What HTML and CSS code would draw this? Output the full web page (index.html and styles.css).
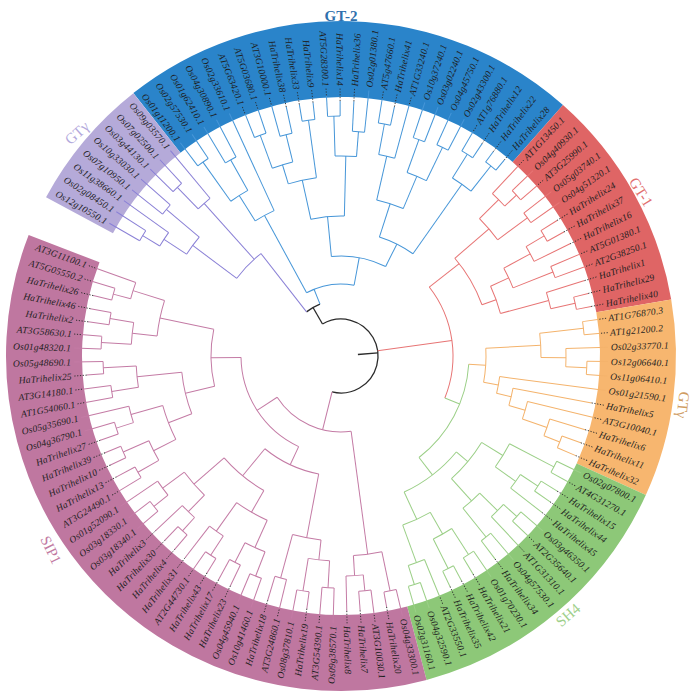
FILE: index.html
```html
<!DOCTYPE html>
<html>
<head>
<meta charset="utf-8">
<title>Trihelix phylogenetic tree</title>
<link rel="stylesheet" href="styles.css">
</head>
<body>
<div class="page">
<svg class="tree" width="700" height="700" viewBox="0 0 700 700" xmlns="http://www.w3.org/2000/svg">
<g transform="translate(341 356)">
  <!-- coloured bands -->
  <circle class="band bd-bl" r="297" pathLength="360" stroke-dasharray="79.8 999" transform="rotate(231.7)"/>
  <circle class="band bd-rd" r="297" pathLength="360" stroke-dasharray="38.8 999" transform="rotate(311.5)"/>
  <circle class="band bd-or" r="297" pathLength="360" stroke-dasharray="34.2 999" transform="rotate(350.3)"/>
  <circle class="band bd-gr" r="297" pathLength="360" stroke-dasharray="50.7 999" transform="rotate(24.5)"/>
  <circle class="band bd-pk" r="297" pathLength="360" stroke-dasharray="126 999" transform="rotate(75.2)"/>
  <circle class="band bd-pu" r="297" pathLength="360" stroke-dasharray="23.4 999" transform="rotate(208.3)"/>

  <!-- root -->
  <g class="t k">
    <line transform="rotate(-5)" x1="17" x2="37"/>
    <circle r="37" pathLength="360" stroke-dasharray="224 999" transform="rotate(240)"/>
    <line transform="rotate(240)" x1="37" x2="56"/>
    <circle r="56" pathLength="360" stroke-dasharray="16 999" transform="rotate(232)"/>
  </g>

  <!-- purple GTgamma -->
  <g class="t pu">
    <line transform="rotate(211.25)" x1="212" x2="232"/><circle r="232" pathLength="360" stroke-dasharray="2.9 999" transform="rotate(209.8)"/>
    <line transform="rotate(213.4)" x1="185" x2="212"/><circle r="212" pathLength="360" stroke-dasharray="4.35 999" transform="rotate(211.25)"/>
    <line transform="rotate(220)" x1="185" x2="228"/><circle r="228" pathLength="360" stroke-dasharray="3 999" transform="rotate(218.5)"/>
    <line transform="rotate(216.7)" x1="130" x2="185"/><circle r="185" pathLength="360" stroke-dasharray="6.6 999" transform="rotate(213.4)"/>
    <line transform="rotate(225.85)" x1="205" x2="235"/><circle r="235" pathLength="360" stroke-dasharray="2.9 999" transform="rotate(224.4)"/>
    <line transform="rotate(228.1)" x1="130" x2="205"/><circle r="205" pathLength="360" stroke-dasharray="4.45 999" transform="rotate(225.85)"/>
    <line transform="rotate(232)" x1="56" x2="130"/><circle r="130" pathLength="360" stroke-dasharray="15.3 999" transform="rotate(216.7)"/>

    <g transform="rotate(209.8)"><line x1="232" x2="267"/><text class="lab f" x="-270" y="3.3" transform="rotate(180)">Os12g10550.1</text></g>
    <g transform="rotate(212.7)"><line x1="232" x2="267"/><text class="lab f" x="-270" y="3.3" transform="rotate(180)">Os02g08450.1</text></g>
    <g transform="rotate(215.6)"><line x1="212" x2="267"/><text class="lab f" x="-270" y="3.3" transform="rotate(180)">Os11g38660.1</text></g>
    <g transform="rotate(218.5)"><line x1="228" x2="267"/><text class="lab f" x="-270" y="3.3" transform="rotate(180)">Os07g10950.1</text></g>
    <g transform="rotate(221.5)"><line x1="228" x2="267"/><text class="lab f" x="-270" y="3.3" transform="rotate(180)">Os10g33030.1</text></g>
    <g transform="rotate(224.4)"><line x1="235" x2="267"/><text class="lab f" x="-270" y="3.3" transform="rotate(180)">Os03g44130.1</text></g>
    <g transform="rotate(227.3)"><line x1="235" x2="267"/><text class="lab f" x="-270" y="3.3" transform="rotate(180)">Os07g02500.1</text></g>
    <g transform="rotate(230.3)"><line x1="205" x2="267"/><text class="lab f" x="-270" y="3.3" transform="rotate(180)">Os09g03570.1</text></g>
  </g>

  <!-- blue GT-2 -->
  <g class="t bl">
    <line transform="rotate(234.55)" x1="190" x2="238"/><circle r="238" pathLength="360" stroke-dasharray="3.1 999" transform="rotate(233)"/>
    <line transform="rotate(240.65)" x1="190" x2="225"/><circle r="225" pathLength="360" stroke-dasharray="3.1 999" transform="rotate(239.1)"/>
    <line transform="rotate(237.6)" x1="160" x2="190"/><circle r="190" pathLength="360" stroke-dasharray="6.1 999" transform="rotate(234.55)"/>
    <line transform="rotate(241.45)" x1="72" x2="160"/><circle r="160" pathLength="360" stroke-dasharray="7.7 999" transform="rotate(237.6)"/>
    <line transform="rotate(249.9)" x1="200" x2="235"/><circle r="235" pathLength="360" stroke-dasharray="3 999" transform="rotate(248.4)"/>
    <line transform="rotate(256.05)" x1="200" x2="228"/><circle r="228" pathLength="360" stroke-dasharray="3.1 999" transform="rotate(254.5)"/>
    <line transform="rotate(252.98)" x1="180" x2="200"/><circle r="200" pathLength="360" stroke-dasharray="6.15 999" transform="rotate(249.9)"/>
    <line transform="rotate(262.15)" x1="180" x2="238"/><circle r="238" pathLength="360" stroke-dasharray="3.1 999" transform="rotate(260.6)"/>
    <line transform="rotate(257.57)" x1="140" x2="180"/><circle r="180" pathLength="360" stroke-dasharray="9.17 999" transform="rotate(252.98)"/>
    <line transform="rotate(268.3)" x1="200" x2="240"/><circle r="240" pathLength="360" stroke-dasharray="3 999" transform="rotate(266.8)"/>
    <line transform="rotate(274.45)" x1="200" x2="225"/><circle r="225" pathLength="360" stroke-dasharray="3.1 999" transform="rotate(272.9)"/>
    <line transform="rotate(271.38)" x1="140" x2="200"/><circle r="200" pathLength="360" stroke-dasharray="6.15 999" transform="rotate(268.3)"/>
    <line transform="rotate(264.48)" x1="100" x2="140"/><circle r="140" pathLength="360" stroke-dasharray="13.81 999" transform="rotate(257.57)"/>
    <line transform="rotate(280.6)" x1="205" x2="236"/><circle r="236" pathLength="360" stroke-dasharray="3 999" transform="rotate(279.1)"/>
    <line transform="rotate(282.9)" x1="160" x2="205"/><circle r="205" pathLength="360" stroke-dasharray="4.6 999" transform="rotate(280.6)"/>
    <line transform="rotate(289.8)" x1="195" x2="230"/><circle r="230" pathLength="360" stroke-dasharray="3 999" transform="rotate(288.3)"/>
    <line transform="rotate(295.95)" x1="195" x2="232"/><circle r="232" pathLength="360" stroke-dasharray="3.1 999" transform="rotate(294.4)"/>
    <line transform="rotate(292.88)" x1="160" x2="195"/><circle r="195" pathLength="360" stroke-dasharray="6.15 999" transform="rotate(289.8)"/>
    <line transform="rotate(287.89)" x1="125" x2="160"/><circle r="160" pathLength="360" stroke-dasharray="9.98 999" transform="rotate(282.9)"/>
    <line transform="rotate(302.05)" x1="210" x2="238"/><circle r="238" pathLength="360" stroke-dasharray="3.1 999" transform="rotate(300.5)"/>
    <line transform="rotate(308.25)" x1="210" x2="242"/><circle r="242" pathLength="360" stroke-dasharray="3.1 999" transform="rotate(306.7)"/>
    <line transform="rotate(305.15)" x1="125" x2="210"/><circle r="210" pathLength="360" stroke-dasharray="6.2 999" transform="rotate(302.05)"/>
    <line transform="rotate(296.52)" x1="100" x2="125"/><circle r="125" pathLength="360" stroke-dasharray="17.26 999" transform="rotate(287.89)"/>
    <line transform="rotate(280.5)" x1="72" x2="100"/><circle r="100" pathLength="360" stroke-dasharray="32.04 999" transform="rotate(264.48)"/>
    <line transform="rotate(248)" x1="56" x2="72"/><circle r="72" pathLength="360" stroke-dasharray="39.05 999" transform="rotate(241.45)"/>

    <g transform="rotate(233)"><line x1="238" x2="267"/><text class="lab f" x="-270" y="3.3" transform="rotate(180)">Os01g11200.1</text></g>
    <g transform="rotate(236.1)"><line x1="238" x2="267"/><text class="lab f" x="-270" y="3.3" transform="rotate(180)">Os02g57530.1</text></g>
    <g transform="rotate(239.1)"><line x1="225" x2="267"/><text class="lab f" x="-270" y="3.3" transform="rotate(180)">Os01g62410.1</text></g>
    <g transform="rotate(242.2)"><line x1="225" x2="267"/><text class="lab f" x="-270" y="3.3" transform="rotate(180)">Os04g30890.1</text></g>
    <g transform="rotate(245.3)"><line x1="160" x2="267"/><text class="lab f" x="-270" y="3.3" transform="rotate(180)">Os02g33610.1</text></g>
    <g transform="rotate(248.4)"><line x1="235" x2="261"/><line class="dot" x1="261" x2="268"/><text class="lab f" x="-270" y="3.3" transform="rotate(180)">AT5G63420.1</text></g>
    <g transform="rotate(251.4)"><line x1="235" x2="261"/><line class="dot" x1="261" x2="268"/><text class="lab f" x="-270" y="3.3" transform="rotate(180)">AT5G03680.1</text></g>
    <g transform="rotate(254.5)"><line x1="228" x2="261"/><line class="dot" x1="261" x2="268"/><text class="lab f" x="-270" y="3.3" transform="rotate(180)">AT3G10000.1</text></g>
    <g transform="rotate(257.6)"><line x1="228" x2="255"/><line class="dot" x1="255" x2="268"/><text class="lab f" x="-270" y="3.3" transform="rotate(180)">HaTrihelix38</text></g>
    <g transform="rotate(260.6)"><line x1="238" x2="255"/><line class="dot" x1="255" x2="268"/><text class="lab f" x="-270" y="3.3" transform="rotate(180)">HaTrihelix33</text></g>
    <g transform="rotate(263.7)"><line x1="238" x2="255"/><line class="dot" x1="255" x2="268"/><text class="lab f" x="-270" y="3.3" transform="rotate(180)">HaTrihelix9</text></g>
    <g transform="rotate(266.8)"><line x1="240" x2="261"/><line class="dot" x1="261" x2="268"/><text class="lab f" x="-270" y="3.3" transform="rotate(180)">AT5G28300.1</text></g>
    <g transform="rotate(269.8)"><line x1="240" x2="255"/><line class="dot" x1="255" x2="268"/><text class="lab f" x="-270" y="3.3" transform="rotate(180)">HaTrihelix14</text></g>
    <g transform="rotate(272.9)"><line x1="225" x2="255"/><line class="dot" x1="255" x2="268"/><text class="lab" x="270" y="3.3">HaTrihelix36</text></g>
    <g transform="rotate(276)"><line x1="225" x2="267"/><text class="lab" x="270" y="3.3">Os02g01380.1</text></g>
    <g transform="rotate(279.1)"><line x1="236" x2="261"/><line class="dot" x1="261" x2="268"/><text class="lab" x="270" y="3.3">AT5g47660.1</text></g>
    <g transform="rotate(282.1)"><line x1="236" x2="255"/><line class="dot" x1="255" x2="268"/><text class="lab" x="270" y="3.3">HaTrihelix41</text></g>
    <g transform="rotate(285.2)"><line x1="205" x2="261"/><line class="dot" x1="261" x2="268"/><text class="lab" x="270" y="3.3">AT1G33240.1</text></g>
    <g transform="rotate(288.3)"><line x1="230" x2="267"/><text class="lab" x="270" y="3.3">Os10g37240.1</text></g>
    <g transform="rotate(291.3)"><line x1="230" x2="267"/><text class="lab" x="270" y="3.3">Os03g02240.1</text></g>
    <g transform="rotate(294.4)"><line x1="232" x2="267"/><text class="lab" x="270" y="3.3">Os04g45750.1</text></g>
    <g transform="rotate(297.5)"><line x1="232" x2="267"/><text class="lab" x="270" y="3.3">Os02g43300.1</text></g>
    <g transform="rotate(300.5)"><line x1="238" x2="261"/><line class="dot" x1="261" x2="268"/><text class="lab" x="270" y="3.3">AT1g76880.1</text></g>
    <g transform="rotate(303.6)"><line x1="238" x2="255"/><line class="dot" x1="255" x2="268"/><text class="lab" x="270" y="3.3">HaTrihelix12</text></g>
    <g transform="rotate(306.7)"><line x1="242" x2="255"/><line class="dot" x1="255" x2="268"/><text class="lab" x="270" y="3.3">HaTrihelix22</text></g>
    <g transform="rotate(309.8)"><line x1="242" x2="255"/><line class="dot" x1="255" x2="268"/><text class="lab" x="270" y="3.3">HaTrihelix28</text></g>
  </g>

  <!-- red GT-1 -->
  <g class="t rd">
    <line transform="rotate(-8)" x1="37" x2="112"/><circle r="112" pathLength="360" stroke-dasharray="60 999" transform="rotate(-38)"/>
    <line transform="rotate(-42.5)" x1="222" x2="238"/><circle r="238" pathLength="360" stroke-dasharray="3 999" transform="rotate(-44)"/>
    <line transform="rotate(-44.75)" x1="195" x2="222"/><circle r="222" pathLength="360" stroke-dasharray="4.5 999" transform="rotate(-47)"/>
    <line transform="rotate(-36.55)" x1="195" x2="232"/><circle r="232" pathLength="360" stroke-dasharray="2.9 999" transform="rotate(-38)"/>
    <line transform="rotate(-40.65)" x1="150" x2="195"/><circle r="195" pathLength="360" stroke-dasharray="8.2 999" transform="rotate(-44.75)"/>
    <line transform="rotate(-30.6)" x1="215" x2="236"/><circle r="236" pathLength="360" stroke-dasharray="3 999" transform="rotate(-32.1)"/>
    <line transform="rotate(-28.35)" x1="185" x2="215"/><circle r="215" pathLength="360" stroke-dasharray="4.5 999" transform="rotate(-30.6)"/>
    <line transform="rotate(-21.6)" x1="185" x2="228"/><circle r="228" pathLength="360" stroke-dasharray="3 999" transform="rotate(-23.1)"/>
    <line transform="rotate(-24.98)" x1="165" x2="185"/><circle r="185" pathLength="360" stroke-dasharray="6.75 999" transform="rotate(-28.35)"/>
    <line transform="rotate(-12.7)" x1="215" x2="240"/><circle r="240" pathLength="360" stroke-dasharray="3 999" transform="rotate(-14.2)"/>
    <line transform="rotate(-14.95)" x1="165" x2="215"/><circle r="215" pathLength="360" stroke-dasharray="4.5 999" transform="rotate(-17.2)"/>
    <line transform="rotate(-19.96)" x1="150" x2="165"/><circle r="165" pathLength="360" stroke-dasharray="10.03 999" transform="rotate(-24.98)"/>
    <line transform="rotate(-38)" x1="112" x2="150"/><circle r="150" pathLength="360" stroke-dasharray="20.69 999" transform="rotate(-40.65)"/>

    <g transform="rotate(-47)"><line x1="222" x2="261"/><line class="dot" x1="261" x2="268"/><text class="lab" x="270" y="3.3">AT1G13450.1</text></g>
    <g transform="rotate(-44)"><line x1="238" x2="267"/><text class="lab" x="270" y="3.3">Os04g40930.1</text></g>
    <g transform="rotate(-41)"><line x1="238" x2="261"/><line class="dot" x1="261" x2="268"/><text class="lab" x="270" y="3.3">AT3G25990.1</text></g>
    <g transform="rotate(-38)"><line x1="232" x2="267"/><text class="lab" x="270" y="3.3">Os05g03740.1</text></g>
    <g transform="rotate(-35.1)"><line x1="232" x2="267"/><text class="lab" x="270" y="3.3">Os04g51320.1</text></g>
    <g transform="rotate(-32.1)"><line x1="236" x2="255"/><line class="dot" x1="255" x2="268"/><text class="lab" x="270" y="3.3">HaTrihelix24</text></g>
    <g transform="rotate(-29.1)"><line x1="236" x2="255"/><line class="dot" x1="255" x2="268"/><text class="lab" x="270" y="3.3">HaTrihelix37</text></g>
    <g transform="rotate(-26.1)"><line x1="215" x2="255"/><line class="dot" x1="255" x2="268"/><text class="lab" x="270" y="3.3">HaTrihelix16</text></g>
    <g transform="rotate(-23.1)"><line x1="228" x2="261"/><line class="dot" x1="261" x2="268"/><text class="lab" x="270" y="3.3">AT5G01380.1</text></g>
    <g transform="rotate(-20.1)"><line x1="228" x2="261"/><line class="dot" x1="261" x2="268"/><text class="lab" x="270" y="3.3">AT2G38250.1</text></g>
    <g transform="rotate(-17.2)"><line x1="215" x2="255"/><line class="dot" x1="255" x2="268"/><text class="lab" x="270" y="3.3">HaTrihelix1</text></g>
    <g transform="rotate(-14.2)"><line x1="240" x2="255"/><line class="dot" x1="255" x2="268"/><text class="lab" x="270" y="3.3">HaTrihelix29</text></g>
    <g transform="rotate(-11.2)"><line x1="240" x2="255"/><line class="dot" x1="255" x2="268"/><text class="lab" x="270" y="3.3">HaTrihelix40</text></g>
  </g>

  <!-- orange GTgamma -->
  <g class="t or">
    <line transform="rotate(-6.55)" x1="200" x2="244"/><circle r="244" pathLength="360" stroke-dasharray="3.1 999" transform="rotate(-8.1)"/>
    <line transform="rotate(2.75)" x1="225" x2="246"/><circle r="246" pathLength="360" stroke-dasharray="3.1 999" transform="rotate(1.2)"/>
    <line transform="rotate(0.43)" x1="200" x2="225"/><circle r="225" pathLength="360" stroke-dasharray="4.65 999" transform="rotate(-1.9)"/>
    <line transform="rotate(-3.06)" x1="145" x2="200"/><circle r="200" pathLength="360" stroke-dasharray="6.98 999" transform="rotate(-6.55)"/>
    <line transform="rotate(21.45)" x1="218" x2="235"/><circle r="235" pathLength="360" stroke-dasharray="3.1 999" transform="rotate(19.9)"/>
    <line transform="rotate(19.13)" x1="192" x2="218"/><circle r="218" pathLength="360" stroke-dasharray="4.65 999" transform="rotate(16.8)"/>
    <line transform="rotate(16.41)" x1="175" x2="192"/><circle r="192" pathLength="360" stroke-dasharray="5.43 999" transform="rotate(13.7)"/>
    <line transform="rotate(13.5)" x1="160" x2="175"/><circle r="175" pathLength="360" stroke-dasharray="5.81 999" transform="rotate(10.6)"/>
    <line transform="rotate(10.45)" x1="145" x2="160"/><circle r="160" pathLength="360" stroke-dasharray="6.1 999" transform="rotate(7.4)"/>
    <line transform="rotate(3.7)" x1="128" x2="145"/><circle r="145" pathLength="360" stroke-dasharray="13.51 999" transform="rotate(-3.06)"/>

    <g transform="rotate(-8.1)"><line x1="244" x2="261"/><line class="dot" x1="261" x2="268"/><text class="lab" x="270" y="3.3">AT1G76870.3</text></g>
    <g transform="rotate(-5)"><line x1="244" x2="261"/><line class="dot" x1="261" x2="268"/><text class="lab" x="270" y="3.3">AT1g21200.2</text></g>
    <g transform="rotate(-1.9)"><line x1="225" x2="267"/><text class="lab" x="270" y="3.3">Os02g33770.1</text></g>
    <g transform="rotate(1.2)"><line x1="246" x2="267"/><text class="lab" x="270" y="3.3">Os12g06640.1</text></g>
    <g transform="rotate(4.3)"><line x1="246" x2="267"/><text class="lab" x="270" y="3.3">Os11g06410.1</text></g>
    <g transform="rotate(7.4)"><line x1="160" x2="267"/><text class="lab" x="270" y="3.3">Os01g21590.1</text></g>
    <g transform="rotate(10.6)"><line x1="175" x2="255"/><line class="dot" x1="255" x2="268"/><text class="lab" x="270" y="3.3">HaTrihelix5</text></g>
    <g transform="rotate(13.7)"><line x1="192" x2="261"/><line class="dot" x1="261" x2="268"/><text class="lab" x="270" y="3.3">AT3G10040.1</text></g>
    <g transform="rotate(16.8)"><line x1="218" x2="255"/><line class="dot" x1="255" x2="268"/><text class="lab" x="270" y="3.3">HaTrihelix6</text></g>
    <g transform="rotate(19.9)"><line x1="235" x2="255"/><line class="dot" x1="255" x2="268"/><text class="lab" x="270" y="3.3">HaTrihelix11</text></g>
    <g transform="rotate(23)"><line x1="235" x2="255"/><line class="dot" x1="255" x2="268"/><text class="lab" x="270" y="3.3">HaTrihelix32</text></g>
  </g>

  <!-- green SH4 -->
  <g class="t gr">
    <line transform="rotate(22)" x1="112" x2="128"/><circle r="128" pathLength="360" stroke-dasharray="48.75 999" transform="rotate(3.7)"/>
    <line transform="rotate(27.5)" x1="190" x2="240"/><circle r="240" pathLength="360" stroke-dasharray="3 999" transform="rotate(26)"/>
    <line transform="rotate(33.45)" x1="215" x2="236"/><circle r="236" pathLength="360" stroke-dasharray="2.9 999" transform="rotate(32)"/>
    <line transform="rotate(35.68)" x1="190" x2="215"/><circle r="215" pathLength="360" stroke-dasharray="4.45 999" transform="rotate(33.45)"/>
    <line transform="rotate(31.59)" x1="165" x2="190"/><circle r="190" pathLength="360" stroke-dasharray="8.18 999" transform="rotate(27.5)"/>
    <line transform="rotate(42.4)" x1="220" x2="238"/><circle r="238" pathLength="360" stroke-dasharray="3 999" transform="rotate(40.9)"/>
    <line transform="rotate(44.65)" x1="195" x2="220"/><circle r="220" pathLength="360" stroke-dasharray="4.5 999" transform="rotate(42.4)"/>
    <line transform="rotate(51.3)" x1="195" x2="232"/><circle r="232" pathLength="360" stroke-dasharray="3 999" transform="rotate(49.8)"/>
    <line transform="rotate(47.98)" x1="165" x2="195"/><circle r="195" pathLength="360" stroke-dasharray="6.65 999" transform="rotate(44.65)"/>
    <line transform="rotate(39.78)" x1="150" x2="165"/><circle r="165" pathLength="360" stroke-dasharray="16.39 999" transform="rotate(31.59)"/>
    <line transform="rotate(57.3)" x1="205" x2="236"/><circle r="236" pathLength="360" stroke-dasharray="3 999" transform="rotate(55.8)"/>
    <line transform="rotate(63.25)" x1="205" x2="238"/><circle r="238" pathLength="360" stroke-dasharray="2.9 999" transform="rotate(61.8)"/>
    <line transform="rotate(60.28)" x1="180" x2="205"/><circle r="205" pathLength="360" stroke-dasharray="5.95 999" transform="rotate(57.3)"/>
    <line transform="rotate(72.2)" x1="220" x2="240"/><circle r="240" pathLength="360" stroke-dasharray="3 999" transform="rotate(70.7)"/>
    <line transform="rotate(69.95)" x1="180" x2="220"/><circle r="220" pathLength="360" stroke-dasharray="4.5 999" transform="rotate(67.7)"/>
    <line transform="rotate(65.11)" x1="150" x2="180"/><circle r="180" pathLength="360" stroke-dasharray="9.67 999" transform="rotate(60.28)"/>
    <line transform="rotate(52.45)" x1="128" x2="150"/><circle r="150" pathLength="360" stroke-dasharray="25.33 999" transform="rotate(39.78)"/>

    <g transform="rotate(26)"><line x1="240" x2="267"/><text class="lab" x="270" y="3.3">Os02g07800.1</text></g>
    <g transform="rotate(29)"><line x1="240" x2="261"/><line class="dot" x1="261" x2="268"/><text class="lab" x="270" y="3.3">AT4G31270.1</text></g>
    <g transform="rotate(32)"><line x1="236" x2="255"/><line class="dot" x1="255" x2="268"/><text class="lab" x="270" y="3.3">HaTrihelix15</text></g>
    <g transform="rotate(34.9)"><line x1="236" x2="255"/><line class="dot" x1="255" x2="268"/><text class="lab" x="270" y="3.3">HaTrihelix44</text></g>
    <g transform="rotate(37.9)"><line x1="215" x2="255"/><line class="dot" x1="255" x2="268"/><text class="lab" x="270" y="3.3">HaTrihelix45</text></g>
    <g transform="rotate(40.9)"><line x1="238" x2="267"/><text class="lab" x="270" y="3.3">Os03g46350.1</text></g>
    <g transform="rotate(43.9)"><line x1="238" x2="261"/><line class="dot" x1="261" x2="268"/><text class="lab" x="270" y="3.3">AT2G35640.1</text></g>
    <g transform="rotate(46.9)"><line x1="220" x2="261"/><line class="dot" x1="261" x2="268"/><text class="lab" x="270" y="3.3">AT1G31310.1</text></g>
    <g transform="rotate(49.8)"><line x1="232" x2="267"/><text class="lab" x="270" y="3.3">Os04g57530.1</text></g>
    <g transform="rotate(52.8)"><line x1="232" x2="255"/><line class="dot" x1="255" x2="268"/><text class="lab" x="270" y="3.3">HaTrihelix34</text></g>
    <g transform="rotate(55.8)"><line x1="236" x2="267"/><text class="lab" x="270" y="3.3">Os01g70230.1</text></g>
    <g transform="rotate(58.8)"><line x1="236" x2="255"/><line class="dot" x1="255" x2="268"/><text class="lab" x="270" y="3.3">HaTrihelix21</text></g>
    <g transform="rotate(61.8)"><line x1="238" x2="255"/><line class="dot" x1="255" x2="268"/><text class="lab" x="270" y="3.3">HaTrihelix42</text></g>
    <g transform="rotate(64.7)"><line x1="238" x2="255"/><line class="dot" x1="255" x2="268"/><text class="lab" x="270" y="3.3">HaTrihelix35</text></g>
    <g transform="rotate(67.7)"><line x1="220" x2="261"/><line class="dot" x1="261" x2="268"/><text class="lab" x="270" y="3.3">AT2G33550.1</text></g>
    <g transform="rotate(70.7)"><line x1="240" x2="267"/><text class="lab" x="270" y="3.3">Os04g32590.1</text></g>
    <g transform="rotate(73.7)"><line x1="240" x2="267"/><text class="lab" x="270" y="3.3">Os02g31160.1</text></g>
  </g>

  <!-- pink SIP1 -->
  <g class="t pk">
    <line transform="rotate(104)" x1="37" x2="76"/><circle r="76" pathLength="360" stroke-dasharray="64.77 999" transform="rotate(82.33)"/>
    <line transform="rotate(78.2)" x1="200" x2="240"/><circle r="240" pathLength="360" stroke-dasharray="3 999" transform="rotate(76.7)"/>
    <line transform="rotate(84.2)" x1="220" x2="236"/><circle r="236" pathLength="360" stroke-dasharray="3 999" transform="rotate(82.7)"/>
    <line transform="rotate(86.45)" x1="200" x2="220"/><circle r="220" pathLength="360" stroke-dasharray="4.5 999" transform="rotate(84.2)"/>
    <line transform="rotate(82.33)" x1="76" x2="200"/><circle r="200" pathLength="360" stroke-dasharray="8.25 999" transform="rotate(78.2)"/>
    <line transform="rotate(93.2)" x1="205" x2="232"/><circle r="232" pathLength="360" stroke-dasharray="3 999" transform="rotate(91.7)"/>
    <line transform="rotate(99.2)" x1="205" x2="238"/><circle r="238" pathLength="360" stroke-dasharray="3 999" transform="rotate(97.7)"/>
    <line transform="rotate(96.2)" x1="185" x2="205"/><circle r="205" pathLength="360" stroke-dasharray="6 999" transform="rotate(93.2)"/>
    <line transform="rotate(105.2)" x1="185" x2="230"/><circle r="230" pathLength="360" stroke-dasharray="3 999" transform="rotate(103.7)"/>
    <line transform="rotate(100.7)" x1="120" x2="185"/><circle r="185" pathLength="360" stroke-dasharray="9 999" transform="rotate(96.2)"/>
    <line transform="rotate(111.2)" x1="210" x2="236"/><circle r="236" pathLength="360" stroke-dasharray="3 999" transform="rotate(109.7)"/>
    <line transform="rotate(117.2)" x1="210" x2="232"/><circle r="232" pathLength="360" stroke-dasharray="3 999" transform="rotate(115.7)"/>
    <line transform="rotate(114.2)" x1="180" x2="210"/><circle r="210" pathLength="360" stroke-dasharray="6 999" transform="rotate(111.2)"/>
    <line transform="rotate(123.2)" x1="215" x2="238"/><circle r="238" pathLength="360" stroke-dasharray="3 999" transform="rotate(121.7)"/>
    <line transform="rotate(125.45)" x1="180" x2="215"/><circle r="215" pathLength="360" stroke-dasharray="4.5 999" transform="rotate(123.2)"/>
    <line transform="rotate(119.83)" x1="155" x2="180"/><circle r="180" pathLength="360" stroke-dasharray="11.25 999" transform="rotate(114.2)"/>
    <line transform="rotate(132.2)" x1="218" x2="236"/><circle r="236" pathLength="360" stroke-dasharray="3 999" transform="rotate(130.7)"/>
    <line transform="rotate(134.45)" x1="195" x2="218"/><circle r="218" pathLength="360" stroke-dasharray="4.5 999" transform="rotate(132.2)"/>
    <line transform="rotate(141.2)" x1="222" x2="240"/><circle r="240" pathLength="360" stroke-dasharray="3 999" transform="rotate(139.7)"/>
    <line transform="rotate(143.45)" x1="195" x2="222"/><circle r="222" pathLength="360" stroke-dasharray="4.5 999" transform="rotate(141.2)"/>
    <line transform="rotate(138.95)" x1="155" x2="195"/><circle r="195" pathLength="360" stroke-dasharray="9 999" transform="rotate(134.45)"/>
    <line transform="rotate(129.39)" x1="120" x2="155"/><circle r="155" pathLength="360" stroke-dasharray="19.12 999" transform="rotate(119.83)"/>
    <line transform="rotate(115.05)" x1="100" x2="120"/><circle r="120" pathLength="360" stroke-dasharray="28.69 999" transform="rotate(100.7)"/>
    <line transform="rotate(150.2)" x1="210" x2="234"/><circle r="234" pathLength="360" stroke-dasharray="3 999" transform="rotate(148.7)"/>
    <line transform="rotate(156.2)" x1="210" x2="238"/><circle r="238" pathLength="360" stroke-dasharray="3 999" transform="rotate(154.7)"/>
    <line transform="rotate(153.2)" x1="185" x2="210"/><circle r="210" pathLength="360" stroke-dasharray="6 999" transform="rotate(150.2)"/>
    <line transform="rotate(162.2)" x1="218" x2="236"/><circle r="236" pathLength="360" stroke-dasharray="3 999" transform="rotate(160.7)"/>
    <line transform="rotate(164.45)" x1="185" x2="218"/><circle r="218" pathLength="360" stroke-dasharray="4.5 999" transform="rotate(162.2)"/>
    <line transform="rotate(158.83)" x1="160" x2="185"/><circle r="185" pathLength="360" stroke-dasharray="11.25 999" transform="rotate(153.2)"/>
    <line transform="rotate(171.2)" x1="205" x2="232"/><circle r="232" pathLength="360" stroke-dasharray="3 999" transform="rotate(169.7)"/>
    <line transform="rotate(177.2)" x1="205" x2="238"/><circle r="238" pathLength="360" stroke-dasharray="3 999" transform="rotate(175.7)"/>
    <line transform="rotate(174.2)" x1="160" x2="205"/><circle r="205" pathLength="360" stroke-dasharray="6 999" transform="rotate(171.2)"/>
    <line transform="rotate(166.52)" x1="130" x2="160"/><circle r="160" pathLength="360" stroke-dasharray="15.37 999" transform="rotate(158.83)"/>
    <line transform="rotate(183.2)" x1="210" x2="240"/><circle r="240" pathLength="360" stroke-dasharray="3 999" transform="rotate(181.7)"/>
    <line transform="rotate(189.2)" x1="210" x2="234"/><circle r="234" pathLength="360" stroke-dasharray="3 999" transform="rotate(187.7)"/>
    <line transform="rotate(186.2)" x1="185" x2="210"/><circle r="210" pathLength="360" stroke-dasharray="6 999" transform="rotate(183.2)"/>
    <line transform="rotate(195.2)" x1="218" x2="236"/><circle r="236" pathLength="360" stroke-dasharray="3 999" transform="rotate(193.7)"/>
    <line transform="rotate(197.45)" x1="185" x2="218"/><circle r="218" pathLength="360" stroke-dasharray="4.5 999" transform="rotate(195.2)"/>
    <line transform="rotate(191.83)" x1="130" x2="185"/><circle r="185" pathLength="360" stroke-dasharray="11.25 999" transform="rotate(186.2)"/>
    <line transform="rotate(179.18)" x1="100" x2="130"/><circle r="130" pathLength="360" stroke-dasharray="25.31 999" transform="rotate(166.52)"/>
    <line transform="rotate(147.1)" x1="76" x2="100"/><circle r="100" pathLength="360" stroke-dasharray="64.13 999" transform="rotate(115.05)"/>

    <g transform="rotate(76.7)"><line x1="240" x2="267"/><text class="lab" x="270" y="3.3">Os04g33300.1</text></g>
    <g transform="rotate(79.7)"><line x1="240" x2="255"/><line class="dot" x1="255" x2="268"/><text class="lab" x="270" y="3.3">HaTrihelix20</text></g>
    <g transform="rotate(82.7)"><line x1="236" x2="261"/><line class="dot" x1="261" x2="268"/><text class="lab" x="270" y="3.3">AT3G10030.1</text></g>
    <g transform="rotate(85.7)"><line x1="236" x2="255"/><line class="dot" x1="255" x2="268"/><text class="lab" x="270" y="3.3">HaTrihelix7</text></g>
    <g transform="rotate(88.7)"><line x1="220" x2="255"/><line class="dot" x1="255" x2="268"/><text class="lab" x="270" y="3.3">HaTrihelix8</text></g>
    <g transform="rotate(91.7)"><line x1="232" x2="267"/><text class="lab f" x="-270" y="3.3" transform="rotate(180)">Os09g38570.1</text></g>
    <g transform="rotate(94.7)"><line x1="232" x2="261"/><line class="dot" x1="261" x2="268"/><text class="lab f" x="-270" y="3.3" transform="rotate(180)">AT3G54390.1</text></g>
    <g transform="rotate(97.7)"><line x1="238" x2="255"/><line class="dot" x1="255" x2="268"/><text class="lab f" x="-270" y="3.3" transform="rotate(180)">HaTrihelix19</text></g>
    <g transform="rotate(100.7)"><line x1="238" x2="267"/><text class="lab f" x="-270" y="3.3" transform="rotate(180)">Os08g37810.1</text></g>
    <g transform="rotate(103.7)"><line x1="230" x2="261"/><line class="dot" x1="261" x2="268"/><text class="lab f" x="-270" y="3.3" transform="rotate(180)">AT3G24860.1</text></g>
    <g transform="rotate(106.7)"><line x1="230" x2="255"/><line class="dot" x1="255" x2="268"/><text class="lab f" x="-270" y="3.3" transform="rotate(180)">HaTrihelix18</text></g>
    <g transform="rotate(109.7)"><line x1="236" x2="267"/><text class="lab f" x="-270" y="3.3" transform="rotate(180)">Os10g41460.1</text></g>
    <g transform="rotate(112.7)"><line x1="236" x2="267"/><text class="lab f" x="-270" y="3.3" transform="rotate(180)">Os04g45940.1</text></g>
    <g transform="rotate(115.7)"><line x1="232" x2="255"/><line class="dot" x1="255" x2="268"/><text class="lab f" x="-270" y="3.3" transform="rotate(180)">HaTrihelix23</text></g>
    <g transform="rotate(118.7)"><line x1="232" x2="255"/><line class="dot" x1="255" x2="268"/><text class="lab f" x="-270" y="3.3" transform="rotate(180)">HaTrihelix17</text></g>
    <g transform="rotate(121.7)"><line x1="238" x2="255"/><line class="dot" x1="255" x2="268"/><text class="lab f" x="-270" y="3.3" transform="rotate(180)">HaTrihelix43</text></g>
    <g transform="rotate(124.7)"><line x1="238" x2="261"/><line class="dot" x1="261" x2="268"/><text class="lab f" x="-270" y="3.3" transform="rotate(180)">AT2G44730.1</text></g>
    <g transform="rotate(127.7)"><line x1="215" x2="255"/><line class="dot" x1="255" x2="268"/><text class="lab f" x="-270" y="3.3" transform="rotate(180)">HaTrihelix31</text></g>
    <g transform="rotate(130.7)"><line x1="236" x2="255"/><line class="dot" x1="255" x2="268"/><text class="lab f" x="-270" y="3.3" transform="rotate(180)">HaTrihelix4</text></g>
    <g transform="rotate(133.7)"><line x1="236" x2="255"/><line class="dot" x1="255" x2="268"/><text class="lab f" x="-270" y="3.3" transform="rotate(180)">HaTrihelix30</text></g>
    <g transform="rotate(136.7)"><line x1="218" x2="255"/><line class="dot" x1="255" x2="268"/><text class="lab f" x="-270" y="3.3" transform="rotate(180)">HaTrihelix3</text></g>
    <g transform="rotate(139.7)"><line x1="240" x2="267"/><text class="lab f" x="-270" y="3.3" transform="rotate(180)">Os03g18340.1</text></g>
    <g transform="rotate(142.7)"><line x1="240" x2="267"/><text class="lab f" x="-270" y="3.3" transform="rotate(180)">Os03g18330.1</text></g>
    <g transform="rotate(145.7)"><line x1="222" x2="267"/><text class="lab f" x="-270" y="3.3" transform="rotate(180)">Os01g52090.1</text></g>
    <g transform="rotate(148.7)"><line x1="234" x2="261"/><line class="dot" x1="261" x2="268"/><text class="lab f" x="-270" y="3.3" transform="rotate(180)">AT3G24490.1</text></g>
    <g transform="rotate(151.7)"><line x1="234" x2="255"/><line class="dot" x1="255" x2="268"/><text class="lab f" x="-270" y="3.3" transform="rotate(180)">HaTrihelix13</text></g>
    <g transform="rotate(154.7)"><line x1="238" x2="255"/><line class="dot" x1="255" x2="268"/><text class="lab f" x="-270" y="3.3" transform="rotate(180)">HaTrihelix10</text></g>
    <g transform="rotate(157.7)"><line x1="238" x2="255"/><line class="dot" x1="255" x2="268"/><text class="lab f" x="-270" y="3.3" transform="rotate(180)">HaTrihelix39</text></g>
    <g transform="rotate(160.7)"><line x1="236" x2="255"/><line class="dot" x1="255" x2="268"/><text class="lab f" x="-270" y="3.3" transform="rotate(180)">HaTrihelix27</text></g>
    <g transform="rotate(163.7)"><line x1="236" x2="267"/><text class="lab f" x="-270" y="3.3" transform="rotate(180)">Os04g36790.1</text></g>
    <g transform="rotate(166.7)"><line x1="218" x2="267"/><text class="lab f" x="-270" y="3.3" transform="rotate(180)">Os05g35690.1</text></g>
    <g transform="rotate(169.7)"><line x1="232" x2="261"/><line class="dot" x1="261" x2="268"/><text class="lab f" x="-270" y="3.3" transform="rotate(180)">AT1G54060.1</text></g>
    <g transform="rotate(172.7)"><line x1="232" x2="261"/><line class="dot" x1="261" x2="268"/><text class="lab f" x="-270" y="3.3" transform="rotate(180)">AT3G14180.1</text></g>
    <g transform="rotate(175.7)"><line x1="238" x2="255"/><line class="dot" x1="255" x2="268"/><text class="lab f" x="-270" y="3.3" transform="rotate(180)">HaTrihelix25</text></g>
    <g transform="rotate(178.7)"><line x1="238" x2="267"/><text class="lab f" x="-270" y="3.3" transform="rotate(180)">Os05g48690.1</text></g>
    <g transform="rotate(181.7)"><line x1="240" x2="267"/><text class="lab f" x="-270" y="3.3" transform="rotate(180)">Os01g48320.1</text></g>
    <g transform="rotate(184.7)"><line x1="240" x2="261"/><line class="dot" x1="261" x2="268"/><text class="lab f" x="-270" y="3.3" transform="rotate(180)">AT3G58630.1</text></g>
    <g transform="rotate(187.7)"><line x1="234" x2="255"/><line class="dot" x1="255" x2="268"/><text class="lab f" x="-270" y="3.3" transform="rotate(180)">HaTrihelix2</text></g>
    <g transform="rotate(190.7)"><line x1="234" x2="255"/><line class="dot" x1="255" x2="268"/><text class="lab f" x="-270" y="3.3" transform="rotate(180)">HaTrihelix46</text></g>
    <g transform="rotate(193.7)"><line x1="236" x2="255"/><line class="dot" x1="255" x2="268"/><text class="lab f" x="-270" y="3.3" transform="rotate(180)">HaTrihelix26</text></g>
    <g transform="rotate(196.7)"><line x1="236" x2="261"/><line class="dot" x1="261" x2="268"/><text class="lab f" x="-270" y="3.3" transform="rotate(180)">AT5G05550.2</text></g>
    <g transform="rotate(199.7)"><line x1="218" x2="261"/><line class="dot" x1="261" x2="268"/><text class="lab f" x="-270" y="3.3" transform="rotate(180)">AT3G11100.1</text></g>
  </g>
</g>

<!-- group names -->
<text class="gl gl-gt2" x="341" y="21">GT-2</text>
<text class="gl gl-gt1" transform="translate(641 192) rotate(58)" y="5">GT-1</text>
<text class="gl gl-gty" transform="translate(683 405) rotate(96)" y="5">GTγ</text>
<text class="gl gl-sh4" transform="translate(568 615) rotate(-41)" y="5">SH4</text>
<text class="gl gl-sip" transform="translate(51 550) rotate(64)" y="5">SIP1</text>
<text class="gl gl-gtp" transform="translate(77 133) rotate(-42)" y="5">GTγ</text>
</svg>
</div>
</body>
</html>
```

FILE: styles.css
```css
html, body {
  margin: 0;
  padding: 0;
  background: #ffffff;
}

.page {
  width: 700px;
  height: 700px;
  overflow: hidden;
}

.tree {
  display: block;
}

/* bands */
.band {
  fill: none;
  stroke-width: 76;
}
.bd-bl { stroke: #2a84ca; }
.bd-rd { stroke: #df6565; }
.bd-or { stroke: #f7b66f; }
.bd-gr { stroke: #8dc878; }
.bd-pk { stroke: #bf77a0; }
.bd-pu { stroke: #b5aad9; }

/* branches */
.t line,
.t circle {
  fill: none;
  stroke-width: 1;
}
.k { stroke: #2b2b2b; }
.k line, .k circle { stroke-width: 1.3; }
.pu { stroke: #8a80d6; }
.bl { stroke: #4696d8; }
.rd { stroke: #e77474; }
.or { stroke: #f4b36c; }
.gr { stroke: #9bcf87; }
.pk { stroke: #c47ba5; }

.t line.dot {
  stroke: #2a2a2a;
  stroke-width: 0.9;
  stroke-dasharray: 1.2 1.6;
}

/* leaf labels */
.lab {
  font-family: "Liberation Serif", "Times New Roman", serif;
  font-style: italic;
  font-size: 9.5px;
  letter-spacing: 0.2px;
  fill: #1e1e1e;
  stroke: none;
}
.f {
  text-anchor: end;
}

/* group names */
.gl {
  font-family: "Liberation Serif", "Times New Roman", serif;
  font-size: 15px;
  text-anchor: middle;
  stroke: none;
}
.gl-gt2 { fill: #2f70ad; font-weight: bold; }
.gl-gt1 { fill: #e27070; }
.gl-gty { fill: #cf9c62; }
.gl-sh4 { fill: #9fd08c; }
.gl-sip { fill: #c27aa3; }
.gl-gtp { fill: #b3a9dc; }
```
